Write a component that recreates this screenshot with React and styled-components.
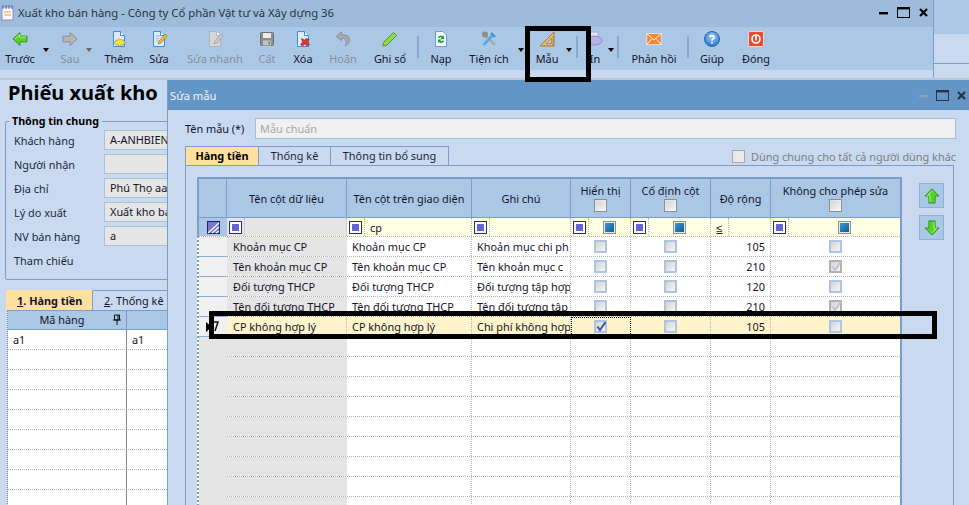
import React from "react";
import styled, { createGlobalStyle } from "styled-components";

const Global = createGlobalStyle`
  html, body { margin: 0; padding: 0; background: #c9daf0; }
  body { font-family: "Noto Sans", "Liberation Sans", sans-serif; font-size: 10.9px; color: #14142a; }
  * { box-sizing: border-box; }
`;

const Page = styled.div`
  position: relative;
  width: 969px;
  height: 505px;
  overflow: hidden;
  display: grid;
  grid-template-columns: 933px 36px;
  background: #c9daf0;
`;
const MainWindow = styled.div`
  display: flex;
  flex-direction: column;
  height: 505px;
  min-width: 0;
`;
const TitleBar = styled.div`
  height: 27px;
  background: #9dbbdb;
  display: flex;
  align-items: center;
  padding: 0 5px 2px 1px;
  gap: 4px;
  font-size: 11.3px;
  color: #2b3340;
`;
const TitleText = styled.span`
  flex: 1;
`;
const WinControls = styled.div`
  display: flex;
  align-items: center;
  gap: 9px;
  color: #000;
`;
const Toolbar = styled.div`
  height: 43px;
  background: #abc7e6;
  display: flex;
  align-items: stretch;
`;
const Tool = styled.div`
  position: relative;
  width: ${(p) => p.$w}px;
  margin-left: ${(p) => p.$ml || 0}px;
  display: flex;
  flex-direction: column;
  align-items: center;
  padding-top: 4px;
  white-space: nowrap;
  font-size: 10.9px;
  line-height: 16px;
  color: ${(p) => (p.$off ? "#8a8f98" : "#14142a")};
  svg { display: block; margin-bottom: 4px; flex: none; }
`;
const Caret = styled.i`
  position: absolute;
  top: 21px;
  right: ${(p) => p.$r}px;
  width: 0;
  height: 0;
  border-left: 3.5px solid transparent;
  border-right: 3.5px solid transparent;
  border-top: 4px solid ${(p) => (p.$off ? "#666" : "#000")};
`;
const ToolSep = styled.div`
  width: 2px;
  height: 22px;
  margin: 9px 0 0 ${(p) => p.$ml || 0}px;
  background: #86aad4;
`;
const Band = styled.div`
  height: 8px;
  background: #c9daf0;
`;
const GreyBand = styled.div`
  height: 2px;
  background: #bcc6d4;
  margin-right: -36px;
  position: relative;
`;
const Side = styled.div`
  height: 80px;
  border-left: 1px solid #7c9ec6;
  background: #c9daf0;
  display: flex;
  flex-direction: column;
`;
const SideTop = styled.div`
  height: 34px;
  background: #abc7e6;
`;
const SideMid = styled.div`
  height: 30px;
  border-bottom: 1px solid #7c9ec6;
`;
const Content = styled.div`
  flex: 1;
  min-height: 0;
  padding: 0 0 0 5px;
`;
const Heading = styled.h1`
  margin: 0 0 9px 3px;
  height: 25px;
  font-size: 20px;
  line-height: 25px;
  font-weight: 700;
  color: #000;
  white-space: nowrap;
`;
const Group = styled.fieldset`
  margin: 0;
  padding: 0 0 0 8px;
  width: 400px;
  height: 166px;
  border: 1px solid #7c9ec6;
  border-radius: 2px;
  display: block;
`;
const GroupTitle = styled.legend`
  margin: 0 0 2px -5px;
  padding: 0 3px;
  font-weight: 700;
  font-size: 10.7px;
  line-height: 14px;
  color: #000;
`;
const FormRow = styled.div`
  display: flex;
  align-items: center;
  height: 20px;
  margin-bottom: 4px;
`;
const FormLabel = styled.span`
  width: 90px;
  color: #22263a;
`;
const FormInput = styled.div`
  width: 200px;
  height: 20px;
  padding: 0 5px;
  line-height: 18px;
  background: #e5e5e5;
  border: 1px solid #a6bfdf;
  white-space: nowrap;
  overflow: hidden;
`;
const LeftTabs = styled.div`
  display: flex;
  margin: 10px 0 0 1px;
  height: 20px;
`;
const LeftTab = styled.div`
  width: ${(p) => p.$w}px;
  height: 20px;
  padding-left: 11px;
  line-height: 19px;
  white-space: nowrap;
  font-weight: ${(p) => (p.$on ? 700 : 400)};
  background: ${(p) => (p.$on ? "#ffe09e" : "transparent")};
  border-right: 1px solid #7c9ec6;
  border-top: 1px solid ${(p) => (p.$on ? "#ffe09e" : "#7c9ec6")};
  u { text-decoration: underline; }
`;
const LeftGrid = styled.div`
  margin-left: 2px;
  width: 170px;
  border-left: 1px dotted #6d94c8;
`;
const LeftHead = styled.div`
  display: grid;
  grid-template-columns: 119px 1fr;
  height: 20px;
  background: #abc7e6;
  border-top: 1px solid #7c9ec6;
  border-bottom: 1px solid #7c9ec6;
`;
const LeftHeadCell = styled.div`
  position: relative;
  text-align: center;
  line-height: 18px;
  border-right: 1px solid #7c9ec6;
  padding-right: 10px;
  svg { position: absolute; right: 4px; top: 3px; }
`;
const LeftRow = styled.div`
  display: grid;
  grid-template-columns: 119px 1fr;
  height: 20px;
  background: #fff;
  border-bottom: 1px dotted #b4b4b4;
`;
const LeftCell = styled.div`
  padding-left: 5px;
  line-height: 19px;
  border-right: 1px solid #8a8a8a;
  margin-bottom: -1px;
`;
const Dialog = styled.section`
  position: absolute;
  left: 167px;
  top: 80px;
  width: 802px;
  height: 425px;
  display: flex;
  flex-direction: column;
  background: #c9daf0;
  border-left: 1px solid #7c9ec6;
`;
const DialogTitle = styled.div`
  height: 30px;
  flex: none;
  background: #6395c6;
  color: #f0f5fb;
  display: flex;
  align-items: center;
  padding: 0 0 0 2px;
  font-size: 11.2px;
`;
const DialogTitleText = styled.span`
  flex: 1;
`;
const DialogControls = styled.div`
  display: flex;
  align-items: center;
  gap: 8px;
  padding-right: 3px;
`;
const DialogBody = styled.div`
  flex: 1;
  min-height: 0;
  display: flex;
  flex-direction: column;
  padding: 8px 13px 0 17px;
`;
const NameRow = styled.div`
  display: flex;
  align-items: center;
  height: 21px;
  margin-bottom: 7px;
`;
const NameLabel = styled.span`
  width: 70px;
  flex: none;
`;
const NameInput = styled.div`
  flex: 1;
  height: 21px;
  padding: 0 4px;
  line-height: 19px;
  color: #a8a8a8;
  background: #f0f0f0;
  border: 1px solid #a6bfdf;
`;
const TabBar = styled.div`
  display: flex;
  align-items: center;
  height: 20px;
  margin-bottom: -1px;
`;
const DlgTab = styled.div`
  width: ${(p) => p.$w}px;
  height: 20px;
  text-align: center;
  line-height: 18px;
  font-weight: ${(p) => (p.$on ? 700 : 400)};
  color: ${(p) => (p.$on ? "#000" : "#22263a")};
  background: ${(p) => (p.$on ? "#ffe09e" : "#c9daf0")};
  border: 1px solid #7c9ec6;
  border-left-width: ${(p) => (p.$on ? 1 : 0)}px;
  border-bottom: 1px solid ${(p) => (p.$on ? "#ffe09e" : "#7c9ec6")};
`;
const ShareLabel = styled.label`
  margin-left: auto;
  display: flex;
  align-items: center;
  gap: 6px;
  color: #808080;
  white-space: nowrap;
`;
const ShareBox = styled.span`
  width: 13px;
  height: 13px;
  background: #e9e9e9;
  border: 1px solid #a9a9a9;
`;
const TabPanel = styled.div`
  flex: 1;
  min-height: 0;
  width: 769px;
  display: flex;
  align-items: flex-start;
  gap: 17px;
  padding: 11px 0 0 11px;
  border: 1px solid #7c9ec6;
  border-bottom: 0;
  overflow: hidden;
`;
const GridBox = styled.div`
  width: 705px;
  flex: none;
  height: 400px;
  border-top: 2px solid #7c9ec6;
  border-left: 2px dotted #7c9ec6;
  border-right: 2px solid #7c9ec6;
  background: #fff;
`;
const COLS = "28px 120px 125px 99px 60px 80px 60px 129px";
const HeadRow = styled.div`
  display: grid;
  grid-template-columns: ${COLS};
  height: 39px;
  background: #abc7e6;
  border-bottom: 1px solid #7c9ec6;
  box-shadow: -2px 0 0 #7c9ec6;
`;
const HeadCell = styled.div`
  display: flex;
  flex-direction: column;
  align-items: center;
  justify-content: center;
  gap: 1px;
  padding-bottom: ${(p) => (p.$box ? 2 : 0)}px;
  line-height: 15px;
  text-align: center;
  white-space: nowrap;
  border-right: 1px solid #7c9ec6;
  &:last-child { border-right: 0; }
`;
const HeadBox = styled.span`
  width: 13px;
  height: 13px;
  border: 1px solid #8f8f8f;
  outline: 1px solid #ffffff55;
  outline-offset: -2px;
  background: linear-gradient(135deg, #d2d2d2, #f7f7f7);
`;
const FilterRow = styled.div`
  display: grid;
  grid-template-columns: ${COLS};
  height: 19px;
  background: #ffffe4;
  border-bottom: 1px dotted #b4b4b4;
  box-shadow: -2px 0 0 #7c9ec6;
`;
const FilterCorner = styled.div`
  background: #abc7e6;
  display: flex;
  align-items: center;
  justify-content: center;
`;
const FilterCell = styled.div`
  display: flex;
  align-items: stretch;
  background: ${(p) => (p.$grey ? "#e5e5e5" : "transparent")};
  border-right: 1px dotted #b4b4b4;
  &:last-child { border-right: 0; }
`;
const FilterOp = styled.div`
  flex: none;
  width: 18px;
  display: flex;
  align-items: center;
  justify-content: center;
  border-right: 1px dotted #b4b4b4;
  color: #14142a;
`;
const FilterValue = styled.div`
  flex: 1;
  display: flex;
  align-items: center;
  justify-content: ${(p) => (p.$center ? "center" : "flex-start")};
  padding-left: ${(p) => (p.$center ? 0 : 5)}px;
`;
const OpBox = styled.span`
  width: 13px;
  height: 13px;
  border: 1px solid #2c2c6c;
  background: #fff;
  padding: 2px;
  &::after { content: ""; display: block; width: 7px; height: 7px; background: #6464d2; }
`;
const ValBox = styled.span`
  width: 13px;
  height: 13px;
  border: 1px solid #8f8f8f;
  padding: 1px;
  background: #e8e8e8;
  &::after {
    content: ""; display: block; width: 9px; height: 9px;
    background: linear-gradient(135deg, #3a9ad0, #0e5c92);
  }
`;
const DataRow = styled.div`
  display: grid;
  grid-template-columns: ${COLS};
  height: 20px;
  background: ${(p) => (p.$sel ? "#fff3cc" : "#fff")};
  border-bottom: 1px dotted #b4b4b4;
`;
const RowHead = styled.div`
  position: relative;
  background: ${(p) => (p.$blank ? "#e5e5e5" : "#f0f0f0")};
  border-bottom: ${(p) => (p.$blank ? "none" : "1px solid #8fb0d8")};
  margin-bottom: -1px;
  svg { position: absolute; left: 6px; top: 4px; }
`;
const Cell = styled.div`
  display: flex;
  align-items: center;
  justify-content: ${(p) => (p.$center ? "center" : p.$right ? "flex-end" : "flex-start")};
  padding: ${(p) => (p.$right ? "0 5px 0 0" : p.$center ? "0" : p.$grey ? "0 0 0 6px" : "0 0 0 5px")};
  white-space: nowrap;
  overflow: hidden;
  background: ${(p) => (p.$grey ? (p.$sel ? "#fff3cc" : "#e5e5e5") : "transparent")};
  border-right: 1px dotted ${(p) => (p.$grey && !p.$sel ? "#e5e5e5" : "#b4b4b4")};
  outline: ${(p) => (p.$focus ? "1px dotted #111" : "none")};
  outline-offset: -1px;
  &:last-child { border-right: 0; }
`;
const RowBox = styled.span`
  position: relative;
  width: 13px;
  height: 13px;
  border: 2px solid ${(p) => (p.$dim ? "#b0b0b0" : "#adc4e2")};
  background: linear-gradient(135deg, #d4d4d4, #f6f6f6);
  svg { position: absolute; left: -1px; top: -2px; }
`;
const SideButtons = styled.div`
  display: flex;
  flex-direction: column;
  gap: 7px;
  padding-top: 6px;
`;
const MoveButton = styled.div`
  width: 25px;
  height: 25px;
  display: flex;
  align-items: center;
  justify-content: center;
  background: #abc7e6;
  border: 1px solid #8fb0d8;
`;
const Highlight = styled.div`
  position: absolute;
  left: ${(p) => p.$x}px;
  top: ${(p) => p.$y}px;
  width: ${(p) => p.$w}px;
  height: ${(p) => p.$h}px;
  border: 5px solid #000;
  pointer-events: none;
`;

const S = ({ children, w = 16, h = 16, v = "0 0 16 16" }) => (
  <svg width={w} height={h} viewBox={v}>{children}</svg>
);
const Doc = ({ fill = "#dcebfa", edge = "#3f8ed8" }) => (
  <>
    <path d="M2.5 .5H9.5L13.5 4.5V15.5H2.5Z" fill={fill} stroke={edge} />
    <path d="M9.5 .5V4.5H13.5" fill="#fff" stroke={edge} />
  </>
);
const icons = {
  back: (
    <S><path d="M1 8 8 1.5V5.2H15V10.8H8V14.5Z" fill="#55d42a" stroke="#2d9a12" strokeLinejoin="round" /><path d="M3 8 7.5 3.8V6.2H14" fill="none" stroke="#aef08a" /></S>
  ),
  fwd: (
    <S><path d="M15 8 8 1.5V5.2H1V10.8H8V14.5Z" fill="#b4b4b4" stroke="#8b8b8b" strokeLinejoin="round" /></S>
  ),
  add: (
    <S><Doc /><path d="M8.5 7.5 10 9h2.5l.5 1.5 1.5 1-1.5 1.2-.5 1.3H10l-1.5 1-1.5-1H5l-.7-1.3L3 11.5l1.3-1L5 9h2Z" fill="#f2e24a" stroke="#a8951c" strokeWidth=".7" /></S>
  ),
  edit: (
    <S><Doc /><path d="M5 5H9M5 7.5H8M5 10H7" stroke="#8fb8e0" /><path d="M7 13 8 10 14 3 16 5 10 12Z" fill="#f0b83a" stroke="#a8791a" strokeWidth=".7" /></S>
  ),
  quick: (
    <S><Doc fill="#d6d6d6" edge="#b4b4b4" /><path d="M7 13 8 10 14 3 16 5 10 12Z" fill="#c8c8c8" stroke="#9f9f9f" strokeWidth=".7" /></S>
  ),
  save: (
    <S><rect x="1.5" y="1.5" width="13" height="13" rx="1" fill="#8f8f8f" stroke="#707070" /><rect x="4" y="2" width="8" height="5" fill="#ececec" /><rect x="4" y="9.5" width="8" height="5" fill="#c2c2c2" /><rect x="9.5" y="10.5" width="1.5" height="3" fill="#777" /></S>
  ),
  del: (
    <S><Doc /><path d="M6.5 7.5 9.5 9 11.5 7.5 14 8.5 12.5 11 14.5 13.5 12 15 9.8 13 7.5 15 5.5 13.5 7.5 11Z" fill="#dd3434" stroke="#a11c1c" strokeWidth=".6" /></S>
  ),
  undo: (
    <S><path d="M6.5 1 1 5.5 6.5 9.5V7C10 7 11.5 8.5 11 13L10 15C14 13 15 10.5 14.5 8 14 4.8 11 3.6 6.5 3.8Z" fill="#a8a8a8" stroke="#8a8a8a" strokeWidth=".8" strokeLinejoin="round" /></S>
  ),
  post: (
    <S><path d="M1.5 11.5 11.5 1.5 14.5 4.5 4.5 14.5 1 15Z" fill="#8fdc4a" stroke="#4f9a1c" strokeLinejoin="round" /></S>
  ),
  reload: (
    <S><path d="M2.5 .5H10L13.5 4V15.5H2.5Z" fill="#f2f6fb" stroke="#6f9cc8" /><path d="M5 6.5C5.5 4.5 8.5 3.8 10 5.5L11 4.5V8H7.5L8.8 6.8C8 6 6.8 6 6 7.2ZM11 10C10.5 12 7.5 12.7 6 11L5 12V8.5H8.5L7.2 9.7C8 10.5 9.2 10.5 10 9.3Z" fill="#1f9d2c" /></S>
  ),
  tools: (
    <S><path d="M14 14 4 4" stroke="#a8a898" strokeWidth="2.2" /><circle cx="4" cy="3.5" r="3" fill="#8f8f80" /><path d="M2.5 14 12 4" stroke="#5aa8e6" strokeWidth="2.6" /><path d="M10.5 1 15 5.5 12.8 6.5 9.5 3.2Z" fill="#3f92d8" /></S>
  ),
  square: (
    <S><path d="M1 15 15 1V15Z" fill="#e8bd6e" stroke="#a57a30" strokeLinejoin="round" /><path d="M7 12.5 12.5 7V12.5Z" fill="#abc7e6" stroke="#a57a30" strokeWidth=".7" /><path d="M14 5V15M5 14V15M8 14V15M11 14V15" stroke="#8a6020" strokeWidth=".5" /></S>
  ),
  print: (
    <S v="0 0 18 16" w={18}><rect x="4" y="1" width="8" height="5" fill="#e4eaf4" stroke="#a0a8d0" /><ellipse cx="8" cy="9.5" rx="8" ry="4.5" fill="#b7b2e4" stroke="#8e88c8" /><circle cx="4" cy="9" r="1" fill="#f3f3fb" /></S>
  ),
  mail: (
    <S v="0 0 18 16" w={16}><rect x="1" y="2" width="16" height="12" fill="#f58a2c" stroke="#fff" strokeWidth=".6" /><path d="M1 2 9 9 17 2M1 14 7 7.5M17 14 11 7.5" fill="none" stroke="#fff" /></S>
  ),
  help: (
    <svg width="16" height="16" viewBox="0 0 16 16"><defs><radialGradient id="hlp" cx=".5" cy=".35" r=".7"><stop offset="0" stopColor="#9fd0f8" /><stop offset="1" stopColor="#1f6fd0" /></radialGradient></defs><circle cx="8" cy="8" r="7.5" fill="url(#hlp)" stroke="#2a64a8" /><path d="M5.8 6.2C6 4 10.2 4 10.2 6.2 10.2 7.8 8 7.8 8 9.6" fill="none" stroke="#fff" strokeWidth="1.7" /><rect x="7.1" y="10.8" width="1.8" height="1.8" fill="#fff" /></svg>
  ),
  close: (
    <S><rect x=".5" y=".5" width="15" height="15" rx="1.5" fill="#e34d35" stroke="#f7d0c8" /><circle cx="8" cy="8" r="4" fill="none" stroke="#fff" strokeWidth="1.6" /><rect x="7.2" y="5" width="1.6" height="4.5" fill="#fff" /></S>
  ),
};

const tools = [
  { label: "Trước", icon: "back", w: 40, caret: -9 },
  { label: "Sau", icon: "fwd", w: 40, ml: 10, off: true, caret: -2 },
  { label: "Thêm", icon: "add", w: 50, ml: 4 },
  { label: "Sửa", icon: "edit", w: 30 },
  { label: "Sửa nhanh", icon: "quick", w: 82, off: true },
  { label: "Cất", icon: "save", w: 22, off: true },
  { label: "Xóa", icon: "del", w: 50 },
  { label: "Hoãn", icon: "undo", w: 30, off: true },
  { label: "Ghi sổ", icon: "post", w: 52, ml: 6 },
  { sep: true, ml: 1 },
  { label: "Nạp", icon: "reload", w: 44 },
  { label: "Tiện ích", icon: "tools", w: 52, caret: -9 },
  { label: "Mẫu", icon: "square", w: 44, ml: 10, caret: -3 },
  { sep: true, ml: 7 },
  { label: "In", icon: "print", w: 34, caret: -2 },
  { sep: true, ml: 5 },
  { label: "Phản hồi", icon: "mail", w: 66, ml: 2 },
  { sep: true },
  { label: "Giúp", icon: "help", w: 46 },
  { label: "Đóng", icon: "close", w: 42 },
];

const rows = [
  ["Khoản mục CP", "Khoản mục CP", "Khoản mục chi ph", false, false, 105, false],
  ["Tên khoản mục CP", "Tên khoản mục CP", "Tên khoản mục c", false, false, 210, true],
  ["Đối tượng THCP", "Đối tượng THCP", "Đối tượng tập hợp", false, false, 120, false],
  ["Tên đối tượng THCP", "Tên đối tượng THCP", "Tên đối tượng tập", false, false, 210, true],
  ["CP không hợp lý", "CP không hợp lý", "Chi phí không hợp", true, false, 105, false],
];
const blanks = Array.from({ length: 9 }, (_, i) => i);
const leftBlanks = Array.from({ length: 8 }, (_, i) => i);
const formRows = [
  ["Khách hàng", "A-ANHBIEN"],
  ["Người nhận", ""],
  ["Địa chỉ", "Phú Thọ aaaaaaaaa"],
  ["Lý do xuất", "Xuất kho bán hàng"],
  ["NV bán hàng", "a"],
];

const Tick = ({ dim }) => (
  <svg width="13" height="13" viewBox="0 0 13 13">
    <path d="M2.5 6.5 5 10 10.5 2" fill="none" stroke={dim ? "#b6c6dc" : "#3a5a92"} strokeWidth="2" />
  </svg>
);
const Check = ({ on, dim }) => (
  <RowBox $dim={dim}>{on && <Tick dim={dim} />}</RowBox>
);
const Arrow = ({ up }) => (
  <svg width="16" height="16" viewBox="0 0 18 18" style={up ? undefined : { transform: "rotate(180deg)" }}>
    <path d="M9 1 17 9H12.5V17H5.5V9H1Z" fill="#57d42c" stroke="#2b8e14" strokeLinejoin="round" />
    <path d="M9 3.5 4 8.2H6.7V15.5" fill="none" stroke="#b2f090" />
  </svg>
);
const Min = ({ c }) => (
  <svg width="9" height="9" viewBox="0 0 9 9"><rect x="0" y="4" width="9" height="2.4" fill={c} /></svg>
);
const Max = ({ c }) => (
  <svg width="13" height="11" viewBox="0 0 13 11"><rect x=".5" y=".5" width="12" height="10" fill="none" stroke={c} /><rect y="0" width="13" height="2.4" fill={c} /></svg>
);
const Cross = ({ c }) => (
  <svg width="9" height="9" viewBox="0 0 9 9"><path d="M1 1 8 8M8 1 1 8" stroke={c} strokeWidth="2.2" /></svg>
);
const AppIcon = () => (
  <svg width="13" height="18" viewBox="0 0 13 18">
    <rect x="1" y="3" width="11" height="13" fill="#fbfbff" stroke="#8a8ad0" />
    <path d="M2 1V5M5 1V5M8 1V5M11 1V5" stroke="#6262b8" />
    <path d="M3 8H10M3 11H10" stroke="#e0a040" />
  </svg>
);
const RowMark = () => (
  <svg width="14" height="12" viewBox="0 0 14 12">
    <path d="M1 1 7 6 1 11Z" fill="#000" />
    <path d="M8 1H13L10 10" fill="none" stroke="#111" strokeWidth="1.5" />
  </svg>
);
const FilterIcon = () => (
  <svg width="13" height="13" viewBox="0 0 13 13">
    <rect x=".5" y=".5" width="12" height="12" fill="#7878cc" stroke="#23236c" />
    <path d="M1 12 12 2M5 12 12 6M9 12 12 10" stroke="#fff" strokeWidth="1.1" />
  </svg>
);
const Pin = () => (
  <svg width="10" height="11" viewBox="0 0 10 11">
    <path d="M2.5 1H7.5V6H2.5ZM1 6H9M5 6V11M6 1V6" fill="none" stroke="#111" />
  </svg>
);

const FilterOpCell = ({ grey, children, center }) => (
  <FilterCell $grey={grey}>
    <FilterOp><OpBox /></FilterOp>
    <FilterValue $center={center}>{children}</FilterValue>
  </FilterCell>
);

export default function App() {
  return (
    <Page>
      <Global />
      <MainWindow>
        <TitleBar>
          <AppIcon />
          <TitleText>Xuất kho bán hàng - Công ty Cổ phần Vật tư và Xây dựng 36</TitleText>
          <WinControls>
            <Min c="#000" />
            <Max c="#000" />
            <Cross c="#000" />
          </WinControls>
        </TitleBar>
        <Toolbar>
          {tools.map((t, i) =>
            t.sep ? (
              <ToolSep key={i} $ml={t.ml} />
            ) : (
              <Tool key={i} $w={t.w} $ml={t.ml} $off={t.off}>
                {icons[t.icon]}
                <span>{t.label}</span>
                {t.caret !== undefined && <Caret $r={t.caret} $off={t.off} />}
              </Tool>
            )
          )}
        </Toolbar>
        <Band />
        <GreyBand />
        <Content>
          <Heading>Phiếu xuất kho</Heading>
          <Group>
            <GroupTitle>Thông tin chung</GroupTitle>
            {formRows.map(([l, v]) => (
              <FormRow key={l}>
                <FormLabel>{l}</FormLabel>
                <FormInput>{v}</FormInput>
              </FormRow>
            ))}
            <FormRow>
              <FormLabel>Tham chiếu</FormLabel>
            </FormRow>
          </Group>
          <LeftTabs>
            <LeftTab $on $w={87}><u>1</u>. Hàng tiền</LeftTab>
            <LeftTab $w={90}><u>2</u>. Thống kê</LeftTab>
          </LeftTabs>
          <LeftGrid>
            <LeftHead>
              <LeftHeadCell>Mã hàng<Pin /></LeftHeadCell>
              <LeftHeadCell />
            </LeftHead>
            <LeftRow>
              <LeftCell>a1</LeftCell>
              <LeftCell>a1</LeftCell>
            </LeftRow>
            {leftBlanks.map((i) => (
              <LeftRow key={i}>
                <LeftCell />
                <LeftCell />
              </LeftRow>
            ))}
          </LeftGrid>
        </Content>
      </MainWindow>
      <Side>
        <SideTop />
        <SideMid />
      </Side>

      <Dialog>
        <DialogTitle>
          <DialogTitleText>Sửa mẫu</DialogTitleText>
          <DialogControls>
            <Min c="#8aa0b8" />
            <Max c="#2a3340" />
            <Cross c="#2a3340" />
          </DialogControls>
        </DialogTitle>
        <DialogBody>
          <NameRow>
            <NameLabel>Tên mẫu (*)</NameLabel>
            <NameInput>Mẫu chuẩn</NameInput>
          </NameRow>
          <TabBar>
            <DlgTab $on $w={74}>Hàng tiền</DlgTab>
            <DlgTab $w={72}>Thống kê</DlgTab>
            <DlgTab $w={118}>Thông tin bổ sung</DlgTab>
            <ShareLabel><ShareBox />Dùng chung cho tất cả người dùng khác</ShareLabel>
          </TabBar>
          <TabPanel>
            <GridBox>
              <HeadRow>
                <HeadCell />
                <HeadCell>Tên cột dữ liệu</HeadCell>
                <HeadCell>Tên cột trên giao diện</HeadCell>
                <HeadCell>Ghi chú</HeadCell>
                <HeadCell $box>Hiển thị<HeadBox /></HeadCell>
                <HeadCell $box>Cố định cột<HeadBox /></HeadCell>
                <HeadCell>Độ rộng</HeadCell>
                <HeadCell $box>Không cho phép sửa<HeadBox /></HeadCell>
              </HeadRow>
              <FilterRow>
                <FilterCorner><FilterIcon /></FilterCorner>
                <FilterOpCell grey />
                <FilterOpCell>cp</FilterOpCell>
                <FilterOpCell />
                <FilterOpCell center><ValBox /></FilterOpCell>
                <FilterOpCell center><ValBox /></FilterOpCell>
                <FilterCell>
                  <FilterOp><u>≤</u></FilterOp>
                  <FilterValue />
                </FilterCell>
                <FilterOpCell center><ValBox /></FilterOpCell>
              </FilterRow>
              {rows.map((r, i) => {
                const sel = r[3];
                return (
                  <DataRow key={i} $sel={sel}>
                    <RowHead>{sel && <RowMark />}</RowHead>
                    <Cell $grey $sel={sel}>{r[0]}</Cell>
                    <Cell>{r[1]}</Cell>
                    <Cell>{r[2]}</Cell>
                    <Cell $center $focus={sel}><Check on={sel} /></Cell>
                    <Cell $center><Check /></Cell>
                    <Cell $right>{r[5]}</Cell>
                    <Cell $center><Check on={r[6]} dim={r[6]} /></Cell>
                  </DataRow>
                );
              })}
              {blanks.map((i) => (
                <DataRow key={i}>
                  <RowHead $blank />
                  <Cell $grey />
                  <Cell />
                  <Cell />
                  <Cell />
                  <Cell />
                  <Cell />
                  <Cell />
                </DataRow>
              ))}
            </GridBox>
            <SideButtons>
              <MoveButton><Arrow up /></MoveButton>
              <MoveButton><Arrow /></MoveButton>
            </SideButtons>
          </TabPanel>
        </DialogBody>
      </Dialog>

      <Highlight $x={525} $y={26} $w={66} $h={56} />
      <Highlight $x={209} $y={311} $w={728} $h={28} />
    </Page>
  );
}
